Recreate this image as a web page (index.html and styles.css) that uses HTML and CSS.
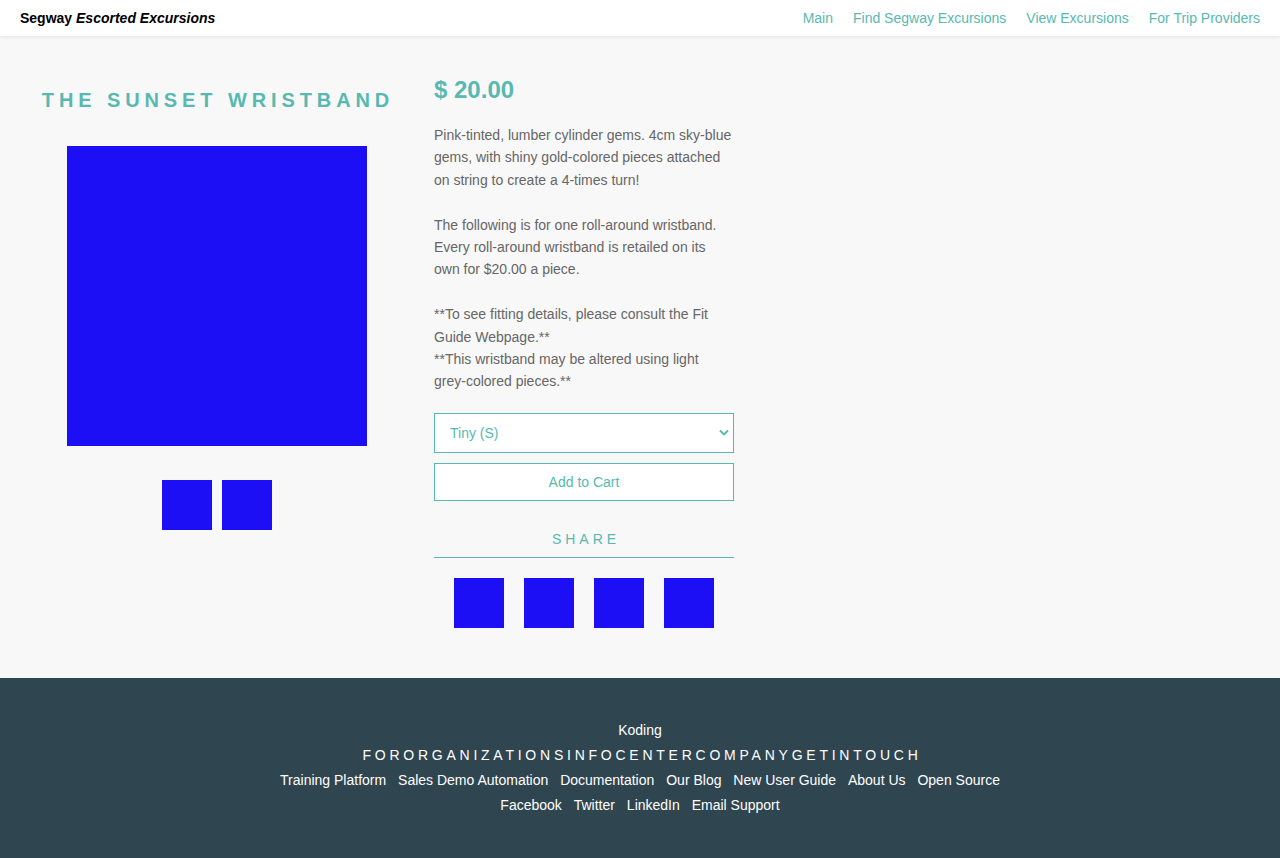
FILE: index.html
```html
<!DOCTYPE html>
<html lang="en">
<head>
<meta charset="utf-8">
<title>The Sunset Wristband</title>
<link rel="stylesheet" href="styles.css">
</head>
<body>
<header class="topbar">
  <div class="brand">Segway <em>Escorted Excursions</em></div>
  <nav class="nav">
    <a href="#">Main</a>
    <a href="#">Find Segway Excursions</a>
    <a href="#">View Excursions</a>
    <a href="#">For Trip Providers</a>
  </nav>
</header>

<main class="product">
  <section class="gallery">
    <h1 class="title">THE SUNSET WRISTBAND</h1>
    <div class="main-image"></div>
    <div class="thumbs">
      <div class="thumb"></div>
      <div class="thumb"></div>
    </div>
  </section>

  <section class="details">
    <h2 class="price">$ 20.00</h2>
    <p class="desc">Pink-tinted, lumber cylinder gems. 4cm sky-blue gems, with shiny gold-colored pieces attached on string to create a 4-times turn!</p>
    <p class="desc">The following is for one roll-around wristband. Every roll-around wristband is retailed on its own for $20.00 a piece.</p>
    <p class="desc">**To see fitting details, please consult the Fit Guide Webpage.**<br>**This wristband may be altered using light grey-colored pieces.**</p>
    <div class="select-wrap">
      <select class="size">
        <option>Tiny (S)</option>
        <option>Medium (M)</option>
        <option>Large (L)</option>
      </select>
      <svg class="chev" width="10" height="7" viewBox="0 0 10 7"><path d="M1 1.5 L5 5.5 L9 1.5" fill="none" stroke="#58b9b0" stroke-width="1.8"/></svg>
    </div>
    <button class="cart">Add to Cart</button>
    <div class="share">SHARE</div>
    <div class="share-icons">
      <div class="share-icon"></div>
      <div class="share-icon"></div>
      <div class="share-icon"></div>
      <div class="share-icon"></div>
    </div>
  </section>
</main>

<footer class="footer">
  <div class="f-line">Koding</div>
  <div class="f-line f-heads">FORORGANIZATIONSINFOCENTERCOMPANYGETINTOUCH</div>
  <div class="f-line">
    <a href="#">Training Platform</a>
    <a href="#">Sales Demo Automation</a>
    <a href="#">Documentation</a>
    <a href="#">Our Blog</a>
    <a href="#">New User Guide</a>
    <a href="#">About Us</a>
    <a href="#">Open Source</a>
  </div>
  <div class="f-line">
    <a href="#">Facebook</a>
    <a href="#">Twitter</a>
    <a href="#">LinkedIn</a>
    <a href="#">Email Support</a>
  </div>
</footer>
</body>
</html>
```
FILE: styles.css
```css
* { box-sizing: border-box; }

html, body {
  margin: 0;
  padding: 0;
}

body {
  font-family: "Liberation Sans", Arial, sans-serif;
  font-size: 14px;
  background: #f8f8f8;
  color: #666;
}

a { text-decoration: none; }

.topbar {
  height: 36px;
  background: #fff;
  display: flex;
  align-items: center;
  justify-content: space-between;
  padding: 0 20px;
  box-shadow: 0 1px 4px rgba(0, 0, 0, 0.08);
  position: relative;
  z-index: 1;
}

.brand {
  font-weight: bold;
  color: #000;
  font-size: 14px;
}

.brand em { font-style: italic; }

.nav {
  display: flex;
  gap: 20px;
}

.nav a {
  color: #58b9b0;
  font-size: 14px;
}

.product {
  display: flex;
  gap: 20px;
  padding: 40px 20px 50px 20px;
}

.gallery {
  width: 394px;
  display: flex;
  flex-direction: column;
  align-items: center;
}

.title {
  margin: 12px 0 0 0;
  padding-left: 2px;
  font-size: 20px;
  line-height: 24px;
  letter-spacing: 4.9px;
  color: #58b9b0;
  font-weight: bold;
}

.main-image {
  width: 300px;
  height: 300px;
  background: #1d0ff5;
  margin-top: 34px;
}

.thumbs {
  display: flex;
  gap: 10px;
  margin-top: 34px;
}

.thumb {
  width: 50px;
  height: 50px;
  background: #1d0ff5;
}

.details {
  width: 300px;
}

.price {
  margin: 0;
  font-size: 24px;
  line-height: 28px;
  font-weight: bold;
  color: #58b9b0;
}

.desc {
  margin: 20px 0 0 0;
  line-height: 22.4px;
  color: #666;
}

.desc + .desc { margin-top: 22.4px; }

.select-wrap {
  position: relative;
  margin-top: 20px;
}

.size {
  display: block;
  width: 300px;
  height: 40px;
  border: 1px solid #58b9b0;
  border-radius: 0;
  background: #fff;
  color: #58b9b0;
  font-family: "Liberation Sans", Arial, sans-serif;
  font-size: 14px;
  padding: 0 15px;
  appearance: none;
  -webkit-appearance: none;
  outline: none;
}

.chev {
  position: absolute;
  right: 5px;
  top: 16px;
  pointer-events: none;
}

.cart {
  display: block;
  width: 300px;
  height: 38px;
  margin-top: 10px;
  border: 1px solid #58b9b0;
  border-radius: 0;
  background: #fff;
  color: #58b9b0;
  font-family: "Liberation Sans", Arial, sans-serif;
  font-size: 14px;
}

.share {
  margin-top: 28px;
  text-align: center;
  color: #58b9b0;
  letter-spacing: 4px;
  line-height: 20px;
  padding: 0 0 8px 4px;
  border-bottom: 1px solid #58b9b0;
}

.share-icons {
  display: flex;
  justify-content: center;
  gap: 20px;
  margin-top: 20px;
}

.share-icon {
  width: 50px;
  height: 50px;
  background: #1d0ff5;
}

.footer {
  background: #2f4550;
  color: #fff;
  text-align: center;
  padding: 40px 0 40px 0;
  height: 180px;
}

.f-line {
  line-height: 25px;
  font-size: 14px;
}

.f-line a {
  color: #fff;
  margin: 0 4px;
}

.f-heads {
  letter-spacing: 3.76px;
  padding-left: 4px;
}
```
